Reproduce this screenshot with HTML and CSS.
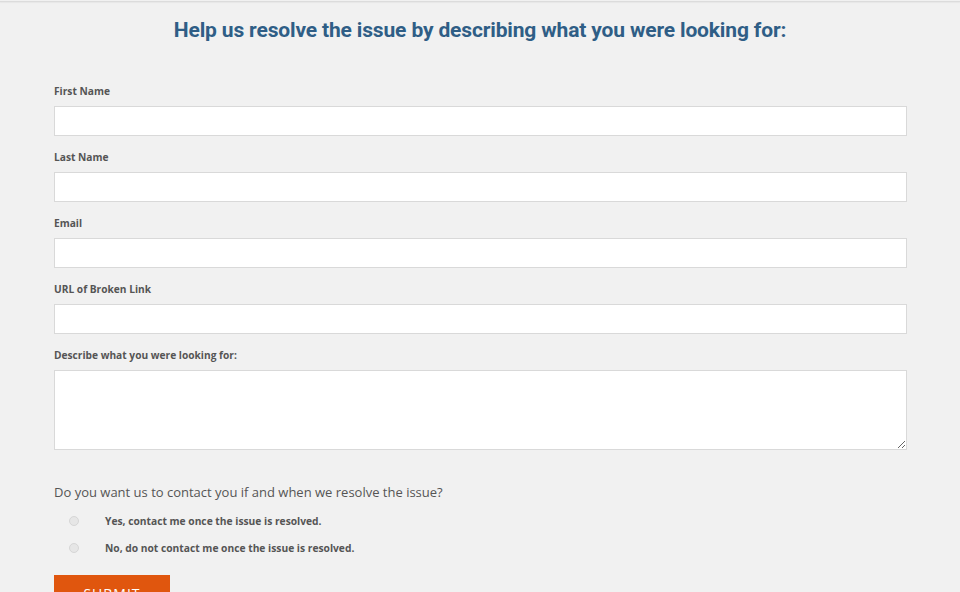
FILE: index.html
```html
<!DOCTYPE html>
<html lang="en">
<head>
<meta charset="utf-8">
<title>Report a Broken Link</title>
<link rel="stylesheet" href="styles.css">
</head>
<body>
<div class="topline"></div>
<h1 class="title">Help us resolve the issue by describing what you were looking for:</h1>
<form class="form">
  <label class="label" for="fn">First Name</label>
  <input class="field" id="fn" type="text">
  <label class="label" for="ln">Last Name</label>
  <input class="field" id="ln" type="text">
  <label class="label" for="em">Email</label>
  <input class="field" id="em" type="text">
  <label class="label" for="url">URL of Broken Link</label>
  <input class="field" id="url" type="text">
  <label class="label" for="desc">Describe what you were looking for:</label>
  <textarea class="area" id="desc"></textarea>
  <p class="question">Do you want us to contact you if and when we resolve the issue?</p>
  <label class="radio-row"><input class="radio" type="radio" name="c"><span>Yes, contact me once the issue is resolved.</span></label>
  <label class="radio-row"><input class="radio" type="radio" name="c"><span>No, do not contact me once the issue is resolved.</span></label>
  <button class="submit" type="button">SUBMIT</button>
</form>
</body>
</html>
```
FILE: styles.css
```css
html, body {
  margin: 0;
  padding: 0;
  background: #f1f1f1;
  font-family: "Open Sans", "Liberation Sans", sans-serif;
  color: #555;
  overflow: hidden;
}
.topline {
  height: 1px;
  margin-top: 1px;
  background: #dcdcdc;
  box-shadow: 0 1px 1px #e6e6e6;
}
.title {
  margin: 15px 0 0;
  text-align: center;
  font-family: Roboto, "Liberation Sans", sans-serif;
  font-weight: 700;
  font-size: 21px;
  line-height: 26px;
  color: #2f5e86;
  letter-spacing: -0.15px;
}
.form {
  display: flex;
  flex-direction: column;
  align-items: flex-start;
  margin: 41px 0 0 54px;
  width: 853px;
}
.label {
  font-size: 10.2px;
  font-weight: 700;
  line-height: 14px;
  color: #555;
  margin-bottom: 8px;
}
.field, .area {
  box-sizing: border-box;
  width: 853px;
  height: 30px;
  margin: 0 0 14px;
  border: 1px solid #d9d9d9;
  background: #fff;
  padding: 0 8px;
  font-family: inherit;
}
.area {
  height: 80px;
  margin-bottom: 33px;
  resize: vertical;
}
.question {
  margin: 0 0 6px;
  font-size: 13px;
  line-height: 18px;
  color: #555;
}
.radio-row {
  display: flex;
  align-items: center;
  height: 27px;
  font-size: 10.25px;
  font-weight: 700;
  color: #555;
}
.radio {
  -webkit-appearance: none;
  appearance: none;
  box-sizing: border-box;
  width: 10px;
  height: 10px;
  margin: 0 26px 0 15px;
  border-radius: 50%;
  border: 1px solid #d6d6d6;
  background: #e6e6e6;
}
.submit {
  margin-top: 14px;
  width: 116px;
  height: 36px;
  border: 0;
  background: #e0560e;
  color: #fff;
  font-family: "Open Sans", "Liberation Sans", sans-serif;
  font-size: 14px;
  letter-spacing: 1px;
  padding: 0;
}
```
